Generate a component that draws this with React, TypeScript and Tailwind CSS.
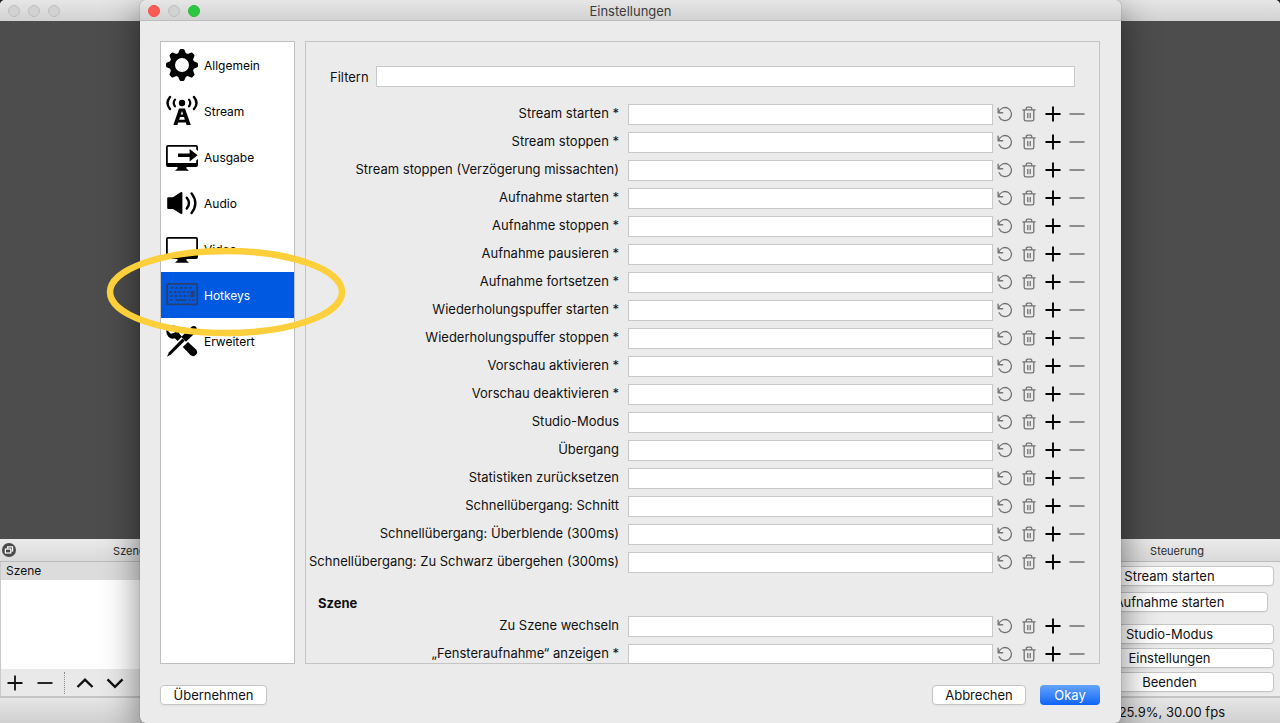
import React from "react";

type IconProps = { children: React.ReactNode; className?: string };

function SideIcon({ children, className = "text-black" }: IconProps) {
  return (
    <svg viewBox="0 0 32 32" className={`size-8 shrink-0 ${className}`} fill="currentColor" aria-hidden="true">
      {children}
    </svg>
  );
}

function GearIcon() {
  return (
    <SideIcon>
      <circle cx="16" cy="16" r="9.7" fill="none" stroke="currentColor" strokeWidth="5.4" />
      {[0, 45, 90, 135, 180, 225, 270, 315].map((a) => (
        <path key={a} transform={`rotate(${a} 16 16)`} d="M11.4 6 L13.4 1.2 Q13.8 0 15 0 H17 Q18.2 0 18.6 1.2 L20.6 6Z" />
      ))}
    </SideIcon>
  );
}

function AntennaIcon() {
  return (
    <SideIcon>
      <circle cx="16" cy="8" r="3.2" />
      <g fill="none" stroke="currentColor" strokeLinecap="round">
        <path strokeWidth="2.2" d="M9 4.6 Q6.4 8 9 11.4 M23 4.6 Q25.6 8 23 11.4" />
        <path strokeWidth="2.4" d="M4 2 Q-1 8 4 14 M28 2 Q33 8 28 14" />
      </g>
      <path
        fillRule="evenodd"
        d="M13 13.5 H19 L24.8 30 H20.6 L19.8 27.6 H12.2 L11.4 30 H7.4Z M16 16 L14.8 19.6 H17.2Z M14 22 L13.2 24.8 H18.8 L18 22Z"
      />
    </SideIcon>
  );
}

function OutputIcon() {
  return (
    <SideIcon>
      <path d="M2 4 H30 Q32 4 32 6 V10 L30.2 8.6 V5.8 H1.8 V22 H30.2 V19.6 L32 18 V24 Q32 26 30 26 H20.5 V27.5 L23 29.8 H9 L11.5 27.5 V26 H2 Q0 26 0 24 V6 Q0 4 2 4Z" />
      <path d="M12 12.4 H23.6 V8 L31.6 14.2 L23.6 20.4 V16 H12Z" />
    </SideIcon>
  );
}

function SpeakerIcon() {
  return (
    <SideIcon>
      <path d="M2.2 10.2 H7 L14.6 5.2 Q16.4 4.4 16.4 6.2 V26 Q16.4 27.6 14.6 26.8 L7 22 H2.2 Q1.2 22 1.2 21 V11.2 Q1.2 10.2 2.2 10.2Z" />
      <g fill="none" stroke="currentColor" strokeWidth="2.4" strokeLinecap="round">
        <path d="M20.8 10.8 Q25.2 16.2 20.8 21.6" />
        <path d="M25.6 6.4 Q33 16.2 25.6 26" />
      </g>
    </SideIcon>
  );
}

function MonitorIcon() {
  return (
    <SideIcon>
      <path
        fillRule="evenodd"
        d="M2 4 H30 Q32 4 32 6 V24 Q32 26 30 26 H20.5 V27.5 L23 29.8 H9 L11.5 27.5 V26 H2 Q0 26 0 24 V6 Q0 4 2 4Z M1.8 5.8 V22 H30.2 V5.8Z"
      />
    </SideIcon>
  );
}

function KeyboardIcon() {
  return (
    <SideIcon className="text-[#28406f]">
      <rect x="1" y="4.8" width="30.2" height="20.6" rx="1" fill="none" stroke="currentColor" strokeWidth="1.8" />
      <g fill="none" stroke="currentColor" strokeWidth="1.8">
        <path strokeDasharray="2.8 1.8" d="M4.6 8.8 H27.6" />
        <path strokeDasharray="2.4 2" d="M3.6 13 H23.4 M4.4 17 H23.4" />
        <path d="M3.6 21.2 H6.6 M9.6 21.2 H20.4 M22.6 21.2 H24.6 M26 21.2 H28.4" />
      </g>
      <rect x="24.6" y="11.8" width="3.8" height="6.4" />
    </SideIcon>
  );
}

function ToolsIcon() {
  return (
    <SideIcon>
      <path d="M0.6 4.6 L4.8 8.8 L8.6 7.8 L9.4 4 L5.8 0.8 Q9.6 0 12 2.6 Q14.4 5.4 13.2 8.8 L16 11.6 L11.6 16 L8.8 13.2 Q5.4 14.6 2.4 11.8 Q-0.4 8.8 0.6 4.6Z" />
      <path d="M16.8 22 L22 17 L29.8 24.2 Q32.4 27.2 30 29.8 Q27.4 32.4 24.4 30Z" />
      <path d="M24.8 2.4 Q28 0 30 2 Q32 4.2 29.8 7.2 L20 16.8 L15.2 12Z" />
      <path d="M16.4 13.4 L18.8 15.8 L5.2 29.2 L1 31.8 L3 27.2Z" />
    </SideIcon>
  );
}

const sections = [
  { label: "Allgemein", icon: <GearIcon /> },
  { label: "Stream", icon: <AntennaIcon /> },
  { label: "Ausgabe", icon: <OutputIcon /> },
  { label: "Audio", icon: <SpeakerIcon /> },
  { label: "Video", icon: <MonitorIcon /> },
  { label: "Hotkeys", icon: <KeyboardIcon />, active: true },
  { label: "Erweitert", icon: <ToolsIcon /> },
];

const generalHotkeys = [
  "Stream starten *",
  "Stream stoppen *",
  "Stream stoppen (Verzögerung missachten)",
  "Aufnahme starten *",
  "Aufnahme stoppen *",
  "Aufnahme pausieren *",
  "Aufnahme fortsetzen *",
  "Wiederholungspuffer starten *",
  "Wiederholungspuffer stoppen *",
  "Vorschau aktivieren *",
  "Vorschau deaktivieren *",
  "Studio-Modus",
  "Übergang",
  "Statistiken zurücksetzen",
  "Schnellübergang: Schnitt",
  "Schnellübergang: Überblende (300ms)",
  "Schnellübergang: Zu Schwarz übergehen (300ms)",
];

const sceneHotkeys = ["Zu Szene wechseln", "„Fensteraufnahme“ anzeigen *"];

const rowActions = [
  {
    name: "Zurücksetzen",
    color: "text-[#747474]",
    icon: <path strokeWidth="1.4" strokeLinecap="round" d="M1.2 2.4 V7.2 H6 M1.8 6.8 A6.9 6.9 0 1 1 2.2 11.4" />,
  },
  {
    name: "Leeren",
    color: "text-[#747474]",
    icon: (
      <path
        strokeWidth="1.4"
        strokeLinecap="round"
        d="M2 4.2 H15 M5.6 4 V2.4 Q5.6 1.2 6.8 1.2 H10.2 Q11.4 1.2 11.4 2.4 V4 M3.4 4.4 V14 Q3.4 15.8 5.2 15.8 H11.8 Q13.6 15.8 13.6 14 V4.4 M7.2 7.8 V12.4 M9.8 7.8 V12.4"
      />
    ),
  },
  { name: "Hinzufügen", color: "text-black", icon: <path strokeWidth="2" d="M0.5 8.5 H16.5 M8.5 0.5 V16.5" /> },
  { name: "Entfernen", color: "text-[#7c7c7c]", icon: <path strokeWidth="1.8" d="M0.5 8.5 H16.5" /> },
];

function HotkeyRow({ id, label }: { id: string; label: string }) {
  return (
    <div className="flex h-7 shrink-0 items-center">
      <label htmlFor={id} className="w-[310px] shrink-0 pb-[2px] text-right whitespace-nowrap">
        {label}
      </label>
      <input
        id={id}
        className="ml-[9px] h-[21px] min-w-0 flex-1 border border-[#c8c8c8] bg-white px-1 outline-none"
      />
      {rowActions.map((action) => (
        <button key={action.name} aria-label={`${label}: ${action.name}`} className={`flex w-6 shrink-0 justify-center ${action.color}`}>
          <svg viewBox="0 0 17 17" className="size-4" fill="none" stroke="currentColor" strokeLinejoin="round" aria-hidden="true">
            {action.icon}
          </svg>
        </button>
      ))}
    </div>
  );
}

function TrafficLights({ active }: { active?: boolean }) {
  const idle = "border-[#bdbdbd] bg-[#d2d2d2]";
  return (
    <div className="flex gap-2 px-2">
      <span className={`size-3 rounded-full border ${active ? "border-[#ee5048] bg-[#fc5b54]" : idle}`} />
      <span className={`size-3 rounded-full border ${idle}`} />
      <span className={`size-3 rounded-full border ${active ? "border-[#27b83b] bg-[#2ac840]" : idle}`} />
    </div>
  );
}

const controls = [
  { label: "Stream starten", box: "w-[208px]" },
  { label: "Aufnahme starten", box: "mt-[6px] w-[196px]" },
  { label: "Studio-Modus", box: "mt-3 w-[208px]" },
  { label: "Einstellungen", box: "mt-1 w-[208px]" },
  { label: "Beenden", box: "mt-1 w-[208px]" },
];

const macButton = "h-5 shrink-0 rounded border border-[#c6c6c6] bg-white text-[13px] leading-[18px] shadow-xs";

function MainWindow() {
  return (
    <div className="flex h-full flex-col overflow-hidden rounded-t-[5px] bg-[#ececec]">
      <div className="flex h-[21px] shrink-0 items-center bg-linear-to-b from-[#e6e6e6] to-[#d2d2d2]">
        <TrafficLights />
      </div>
      <div className="min-h-0 flex-1 bg-[#4d4d4d]" />
      <div className="flex h-[159px] shrink-0 justify-between border-b-2 border-[#c4c4c4]">
        <section className="flex w-[253px] flex-col">
          <div className="flex h-[23px] items-center border-b border-[#bcbcbc] bg-linear-to-b from-[#eaeaea] to-[#dadada] pl-[2px] text-[11px] text-[#2b2b2b]">
            <button aria-label="Szenen ablösen" className="flex size-[14px] items-center justify-center rounded-full bg-[#4a4a4a] text-white">
              <svg viewBox="0 0 14 14" className="size-[14px]" fill="none" stroke="currentColor" strokeWidth="1.2" aria-hidden="true">
                <path d="M5.6 5.4 V3.8 H10.6 V8 H9.2" />
                <rect x="3.4" y="6" width="5.4" height="4" />
              </svg>
            </button>
            <h2 className="flex-1 pt-px pr-1 text-center">Szenen</h2>
          </div>
          <ul className="flex-1 border-l border-[#c9c9c9] bg-white">
            <li className="h-[18px] bg-[#dcdcdc] pl-[5px] text-[12px] leading-[18px]">Szene</li>
          </ul>
          <div className="flex h-[27px] items-center border-l border-[#c9c9c9] bg-[#e9e9e9] pl-[6px]">
            <button aria-label="Szene hinzufügen">
              <svg viewBox="0 0 16 16" className="size-4" stroke="currentColor" strokeWidth="1.8" aria-hidden="true"><path d="M0.5 8 H15.5 M8 0.5 V15.5" /></svg>
            </button>
            <button aria-label="Szene entfernen" className="ml-[14px]">
              <svg viewBox="0 0 16 16" className="size-4" stroke="currentColor" strokeWidth="1.8" aria-hidden="true"><path d="M0.5 8 H15.5" /></svg>
            </button>
            <span className="ml-[11px] h-[22px] border-l border-dotted border-[#8a8a8a]" />
            <button aria-label="Szene nach oben" className="ml-[11px]">
              <svg viewBox="0 0 18 16" className="h-4 w-[18px]" fill="none" stroke="currentColor" strokeWidth="2.4" aria-hidden="true"><path d="M1.5 12 L9 4.6 L16.5 12" /></svg>
            </button>
            <button aria-label="Szene nach unten" className="ml-3">
              <svg viewBox="0 0 18 16" className="h-4 w-[18px]" fill="none" stroke="currentColor" strokeWidth="2.4" aria-hidden="true"><path d="M1.5 4.4 L9 11.8 L16.5 4.4" /></svg>
            </button>
          </div>
        </section>
        <section className="flex w-[220px] flex-col">
          <h2 className="h-[23px] border-b border-[#bcbcbc] bg-linear-to-b from-[#eaeaea] to-[#dadada] pl-[14px] text-center text-[11px] leading-6 text-[#2b2b2b]">
            Steuerung
          </h2>
          <div className="flex flex-col items-center pt-1 pr-px">
            {controls.map((c) => (
              <button key={c.label} className={`${macButton} ${c.box}`}>
                {c.label}
              </button>
            ))}
          </div>
        </section>
      </div>
      <footer className="flex h-[25px] shrink-0 items-center justify-end bg-linear-to-b from-[#e6e6e6] to-[#d0d0d0] pt-[2px] pr-[55px] text-[13px]">
        25.9%, 30.00 fps
      </footer>
    </div>
  );
}

function SettingsDialog() {
  return (
    <div
      role="dialog"
      aria-labelledby="dialog-title"
      className="absolute inset-y-0 right-[159px] left-[140px] flex flex-col rounded-md bg-[#ebebeb] shadow-[0_12px_36px_rgba(0,0,0,0.5),0_0_1px_rgba(0,0,0,0.6)]"
    >
      <header className="grid h-[21px] shrink-0 grid-cols-[1fr_auto_1fr] items-center rounded-t-md border-b border-[#bdbdbd] bg-linear-to-b from-[#e6e6e6] to-[#d2d2d2]">
        <TrafficLights active />
        <h1 id="dialog-title" className="pt-px text-[13px] text-[#3c3c3c]">
          Einstellungen
        </h1>
      </header>
      <div className="flex min-h-0 flex-1 flex-col pt-5 pr-[21px] pb-[18px] pl-5">
        <div className="flex min-h-0 flex-1 gap-[10px]">
          <nav className="w-[135px] shrink-0 border border-[#bfbfbf] bg-white text-[12px]">
            {sections.map((s) => (
              <button
                key={s.label}
                aria-current={s.active ? "page" : undefined}
                className={`flex h-[46px] w-full items-center gap-[6px] pl-[5px] ${s.active ? "bg-[#0059e1] text-white" : "text-black"}`}
              >
                {s.icon}
                <span className="pt-[2px]">{s.label}</span>
              </button>
            ))}
          </nav>
          <main className="flex min-w-0 flex-1 flex-col overflow-hidden border border-[#c4c4c4] pr-[10px] pl-[3px]">
            <div className="mt-6 flex h-[21px] shrink-0 items-center pr-[14px] pl-[21px]">
              <label htmlFor="filter">Filtern</label>
              <input id="filter" className="ml-[7px] h-[21px] min-w-0 flex-1 border border-[#c8c8c8] bg-white px-1 outline-none" />
            </div>
            <div className="mt-[13px] flex shrink-0 flex-col">
              {generalHotkeys.map((label, i) => (
                <HotkeyRow key={label} id={`general-${i}`} label={label} />
              ))}
            </div>
            <h2 className="mt-[17px] h-[19px] shrink-0 pl-[9px] font-bold">Szene</h2>
            <div className="flex shrink-0 flex-col">
              {sceneHotkeys.map((label, i) => (
                <HotkeyRow key={label} id={`scene-${i}`} label={label} />
              ))}
            </div>
          </main>
        </div>
        <footer className="mt-[21px] flex shrink-0">
          <button className={`${macButton} w-[107px]`}>Übernehmen</button>
          <button className={`${macButton} ml-auto w-[94px]`}>Abbrechen</button>
          <button className="ml-[14px] h-5 w-[60px] rounded bg-linear-to-b from-[#62a4fb] to-[#0a63f7] text-[13px] leading-5 text-white">
            Okay
          </button>
        </footer>
      </div>
      <svg viewBox="0 0 240 90" className="pointer-events-none absolute top-[247px] -left-[34px] h-[90px] w-[240px]" fill="none" aria-hidden="true">
        <ellipse cx="120" cy="45" rx="116" ry="41" stroke="#fdcf3a" strokeWidth="6.5" />
      </svg>
    </div>
  );
}

export default function App() {
  return (
    <div className="relative h-screen overflow-hidden bg-[#1c1c1c] font-[Inter,'Liberation_Sans',sans-serif] text-[13px] leading-5 text-[#111]">
      <MainWindow />
      <SettingsDialog />
    </div>
  );
}
